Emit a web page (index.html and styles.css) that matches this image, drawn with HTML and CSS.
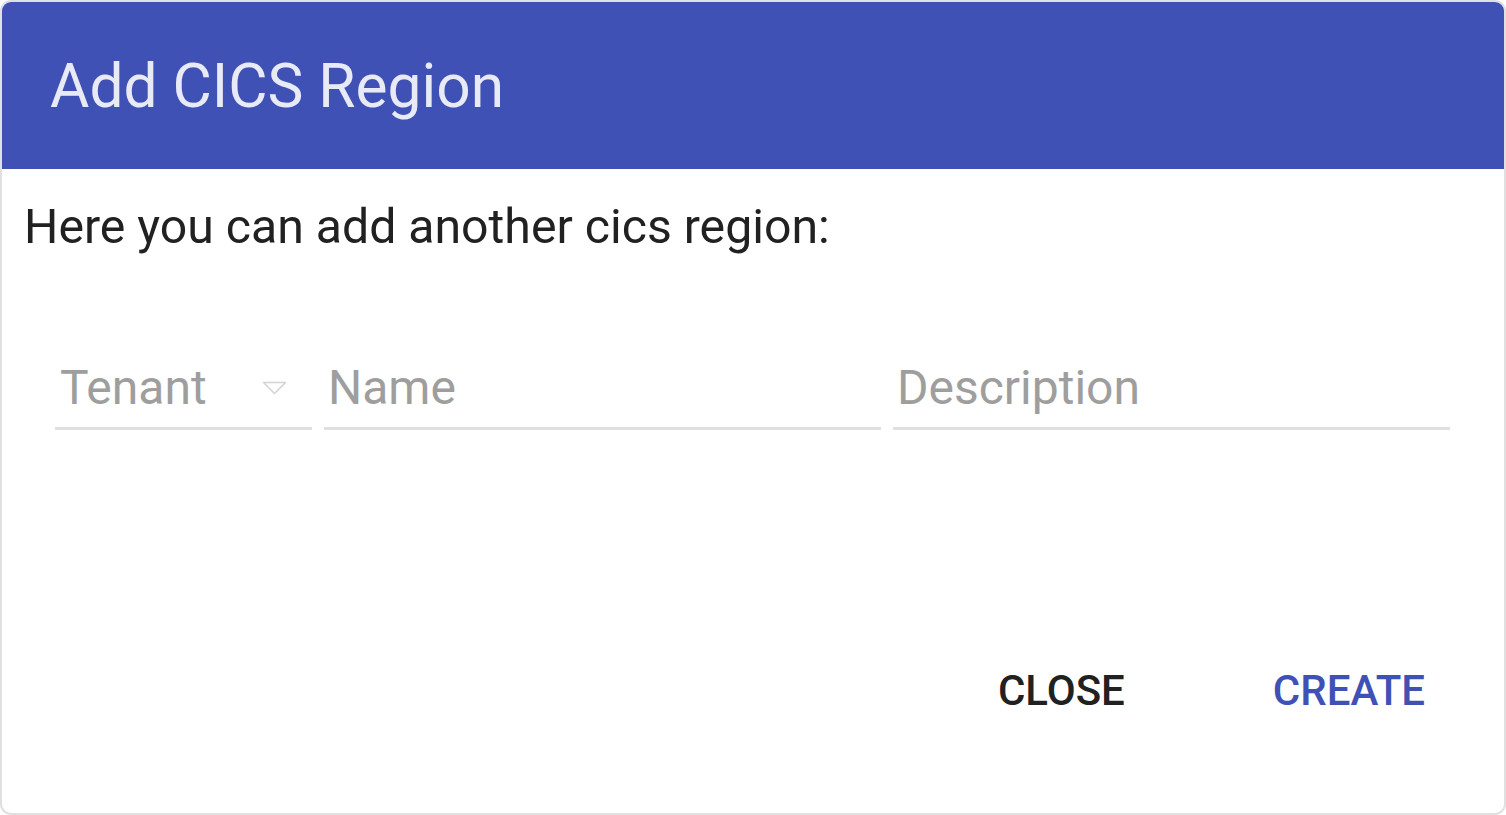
FILE: index.html
```html
<!DOCTYPE html>
<html lang="en">
<head>
<meta charset="utf-8">
<title>Add CICS Region</title>
<link rel="stylesheet" href="styles.css">
</head>
<body>
<div class="dialog">
  <header class="dialog-title">Add CICS Region</header>
  <div class="dialog-content">
    <p class="intro">Here you can add another cics region:</p>
    <div class="fields">
      <div class="field field-select">
        <span class="placeholder">Tenant</span>
        <svg class="arrow" width="25" height="14" viewBox="0 0 25 14" aria-hidden="true">
          <path d="M1.5 1.5 H23.5 L12.5 12.5 Z" fill="none" stroke="#d4d4d4" stroke-width="1.6" stroke-linejoin="round"/>
        </svg>
      </div>
      <div class="field field-wide"><span class="placeholder">Name</span></div>
      <div class="field field-wide"><span class="placeholder">Description</span></div>
    </div>
  </div>
  <div class="dialog-actions">
    <button class="btn btn-close" type="button">CLOSE</button>
    <button class="btn btn-create" type="button">CREATE</button>
  </div>
</div>
</body>
</html>
```
FILE: styles.css
```css
html, body {
  margin: 0;
  padding: 0;
  background: #ffffff;
}

body {
  font-family: Roboto, "Liberation Sans", Arial, sans-serif;
}

.dialog {
  box-sizing: border-box;
  width: 1506px;
  height: 815px;
  border: 2px solid #e0e0e0;
  border-radius: 11px;
  overflow: hidden;
  background: #ffffff;
  display: flex;
  flex-direction: column;
}

.dialog-title {
  box-sizing: border-box;
  height: 167px;
  padding: 37px 48px 0 48px;
  background: #3f51b5;
  color: #e8eaf6;
  font-size: 60.4px;
  font-weight: 400;
  line-height: 96px;
}

.dialog-content {
  padding: 22px 52px 0 22px;
}

.intro {
  margin: 0;
  font-size: 48.2px;
  line-height: 72px;
  color: #212121;
}

.fields {
  display: flex;
  gap: 12px;
  margin-top: 97px;
  padding-left: 31px;
}

.field {
  box-sizing: border-box;
  display: flex;
  align-items: center;
  padding: 0 0 11px 5px;
  border-bottom: 3px solid #e0e0e0;
  font-size: 48px;
  line-height: 56px;
}

.field-select {
  width: 257px;
  padding-right: 25px;
}

.field-wide {
  width: 557px;
  padding-left: 4px;
}

.placeholder {
  flex: 1;
  color: #9e9e9e;
}

.arrow {
  display: block;
  flex: none;
}

.dialog-actions {
  display: flex;
  justify-content: flex-end;
  gap: 52px;
  margin-top: 207px;
  padding-right: 31px;
}

.btn {
  border: 0;
  background: transparent;
  padding: 0 48px;
  margin: 0;
  font-family: Roboto, "Liberation Sans", Arial, sans-serif;
  font-size: 42px;
  font-weight: 500;
  line-height: 108px;
  cursor: pointer;
}

.btn-close {
  color: #212121;
}

.btn-create {
  color: #3f51b5;
}
```
